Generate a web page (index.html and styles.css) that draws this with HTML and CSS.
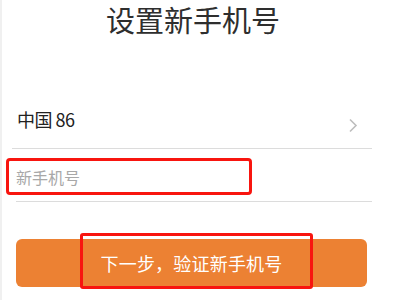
FILE: index.html
```html
<!DOCTYPE html>
<html lang="zh-CN">
<head>
  <meta charset="UTF-8" />
  <meta name="viewport" content="width=device-width, initial-scale=1.0" />
  <title>设置新手机号</title>
  <link rel="stylesheet" href="styles.css">
</head>
<body>
  <div class="page">
    <h1 class="title">设置新手机号</h1>

    <div class="form">
      <div class="row country-row">
        <span class="country">中国 86</span>
        <svg class="chevron" width="10" height="15" viewBox="0 0 10 15">
          <path d="M2 1.5 L8 7.5 L2 13.5" fill="none" stroke="#bdbdbd" stroke-width="1.6" />
        </svg>
      </div>
      <div class="row phone-row">
        <div class="mark phone-mark">
          <input type="text" class="phone-input" placeholder="新手机号">
        </div>
      </div>
    </div>

    <div class="btn-wrap">
      <button class="btn">下一步，验证新手机号</button>
      <span class="mark btn-mark"></span>
    </div>
  </div>
</body>
</html>
```

FILE: styles.css
```css
/* Reset & Base */
* { margin: 0; padding: 0; box-sizing: border-box; }
body { font-family: "Noto Sans CJK SC", "Noto Sans", sans-serif; background: #fff; color: #333; }
.page { width: 400px; height: 300px; overflow: hidden; border-left: 2px solid #f0f0f0; padding-top: 2px; }

/* Title */
.title { width: 382px; text-align: center; font-size: 29px; font-weight: normal; line-height: 34px; color: #2e2e2e; margin-bottom: 53px; }

/* Form rows */
.form { margin-left: 10px; width: 360px; }
.row { display: flex; align-items: center; border-bottom: 1px solid #dcdcdc; }
.country-row { height: 60px; padding-left: 5px; padding-right: 14px; justify-content: space-between; }
.country { font-size: 18px; color: #222; letter-spacing: -0.5px; }
.chevron { margin-top: 14px; }
.phone-row { margin-left: 4px; height: 53px; padding-bottom: 6px; align-items: flex-end; }

/* Red annotation marks */
.mark { border: 3px solid #f8150f; border-radius: 4px; }
.phone-mark { margin-left: -10px; width: 246px; height: 37px; display: flex; align-items: center; }
.phone-input { border: none; outline: none; background: transparent; width: 100%; padding-left: 7px; font-family: inherit; font-size: 16px; color: #333; }
.phone-input::placeholder { color: #a8a8a8; }

/* Button */
.btn-wrap { position: relative; margin: 37px 0 0 14px; width: 351px; }
.btn { display: block; width: 100%; height: 48px; border: none; border-radius: 6px; background: #ec8133; color: #fff; font-family: inherit; font-size: 18px; letter-spacing: 0.2px; }
.btn-mark { position: absolute; left: 64px; top: -6px; width: 233px; height: 56px; border-radius: 3px; }
```
